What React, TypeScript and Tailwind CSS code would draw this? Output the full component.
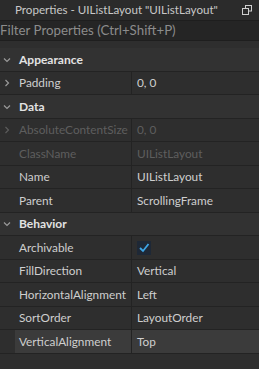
import React from 'react';

type Prop = {
  name: string;
  value?: string;
  disabled?: boolean;
  expandable?: boolean;
  checkbox?: boolean;
  selected?: boolean;
};

type Section = { title: string; props: Prop[] };

const SECTIONS: Section[] = [
  { title: 'Appearance', props: [{ name: 'Padding', value: '0, 0', expandable: true }] },
  {
    title: 'Data',
    props: [
      { name: 'AbsoluteContentSize', value: '0, 0', disabled: true, expandable: true },
      { name: 'ClassName', value: 'UIListLayout', disabled: true },
      { name: 'Name', value: 'UIListLayout' },
      { name: 'Parent', value: 'ScrollingFrame' },
    ],
  },
  {
    title: 'Behavior',
    props: [
      { name: 'Archivable', checkbox: true },
      { name: 'FillDirection', value: 'Vertical' },
      { name: 'HorizontalAlignment', value: 'Left' },
      { name: 'SortOrder', value: 'LayoutOrder' },
      { name: 'VerticalAlignment', value: 'Top', selected: true },
    ],
  },
];

const Chevron = ({ open, dim }: { open: boolean; dim?: boolean }) => (
  <svg width="8" height="8" viewBox="0 0 8 8" className={dim ? 'text-[#5c5c5c]' : 'text-[#9a9a9a]'}>
    {open ? (
      <path d="M1 2.5 L4 5.5 L7 2.5" fill="none" stroke="currentColor" strokeWidth="1.2" />
    ) : (
      <path d="M2.5 1 L5.5 4 L2.5 7" fill="none" stroke="currentColor" strokeWidth="1.2" />
    )}
  </svg>
);

// rows alternate 24/23px so 13 rows average out like the reference
const rowH = (i: number) => (i % 2 === 0 ? 'h-[24px]' : 'h-[23px]');

const PropRow = ({ p, i }: { p: Prop; i: number }) => (
  <div className={`flex ${rowH(i)} border-b border-[#232323] text-[11.8px]`}>
    <div className="flex w-[15px] items-center pl-[3px]">
      {p.expandable && <Chevron open={false} dim={p.disabled} />}
    </div>
    <div
      className={`flex w-[117px] items-center border-r border-[#232323] pl-[4px] ${
        p.selected ? 'bg-[#3b3b3b]' : ''
      } ${p.disabled ? 'text-[#5e5e5e]' : 'text-[#cfcfcf]'}`}
    >
      {p.name}
    </div>
    <div
      className={`flex flex-1 items-center pl-[5px] ${p.selected ? 'bg-[#3b3b3b]' : ''} ${
        p.disabled ? 'text-[#5e5e5e]' : 'text-[#cfcfcf]'
      }`}
    >
      {p.checkbox ? (
        <div className="flex h-[14px] w-[14px] items-center justify-center bg-[#1e2836]">
          <svg width="12" height="12" viewBox="0 0 12 12">
            <path d="M2 6 L5 9 L10.5 2" fill="none" stroke="#3ea6e6" strokeWidth="1.8" />
          </svg>
        </div>
      ) : (
        p.value
      )}
    </div>
  </div>
);

const App: React.FC = () => {
  let idx = 0;
  return (
    <div
      className="flex h-[369px] w-[259px] flex-col overflow-hidden bg-[#2e2e2e]"
      style={{ fontFamily: 'Lato, "Open Sans", sans-serif' }}
    >
      {/* title bar */}
      <div className="flex h-[20px] items-center bg-[#2b2b2b] pl-[15px] pr-[7px] text-[11.6px] text-[#c8c8c8]">
        <span className="flex-1 truncate">Properties - UIListLayout "UIListLayout"</span>
        <svg width="10" height="10" viewBox="0 0 10 10" className="text-[#cfcfcf]">
          <rect x="3.5" y="0.5" width="6" height="5.5" fill="none" stroke="currentColor" />
          <rect x="0.5" y="3.5" width="6" height="6" fill="#2b2b2b" stroke="currentColor" />
        </svg>
      </div>

      {/* filter */}
      <div className="flex h-[21px] items-center border-y border-[#1e1e1e] bg-[#252525] text-[13.3px] text-[#8c8c8c]">
        Filter Properties (Ctrl+Shift+P)
      </div>

      <div className="h-[7px]" />

      {SECTIONS.map((s) => {
        const hi = idx++;
        return (
          <div key={s.title}>
            <div
              className={`flex ${rowH(hi)} items-center border-b border-[#232323] bg-[#323232] text-[12px] font-bold text-[#e2e2e2]`}
            >
              <div className="flex w-[19px] items-center pl-[3px]">
                <Chevron open />
              </div>
              {s.title}
            </div>
            {s.props.map((p) => (
              <PropRow key={p.name} p={p} i={idx++} />
            ))}
          </div>
        );
      })}
    </div>
  );
};

export default App;
